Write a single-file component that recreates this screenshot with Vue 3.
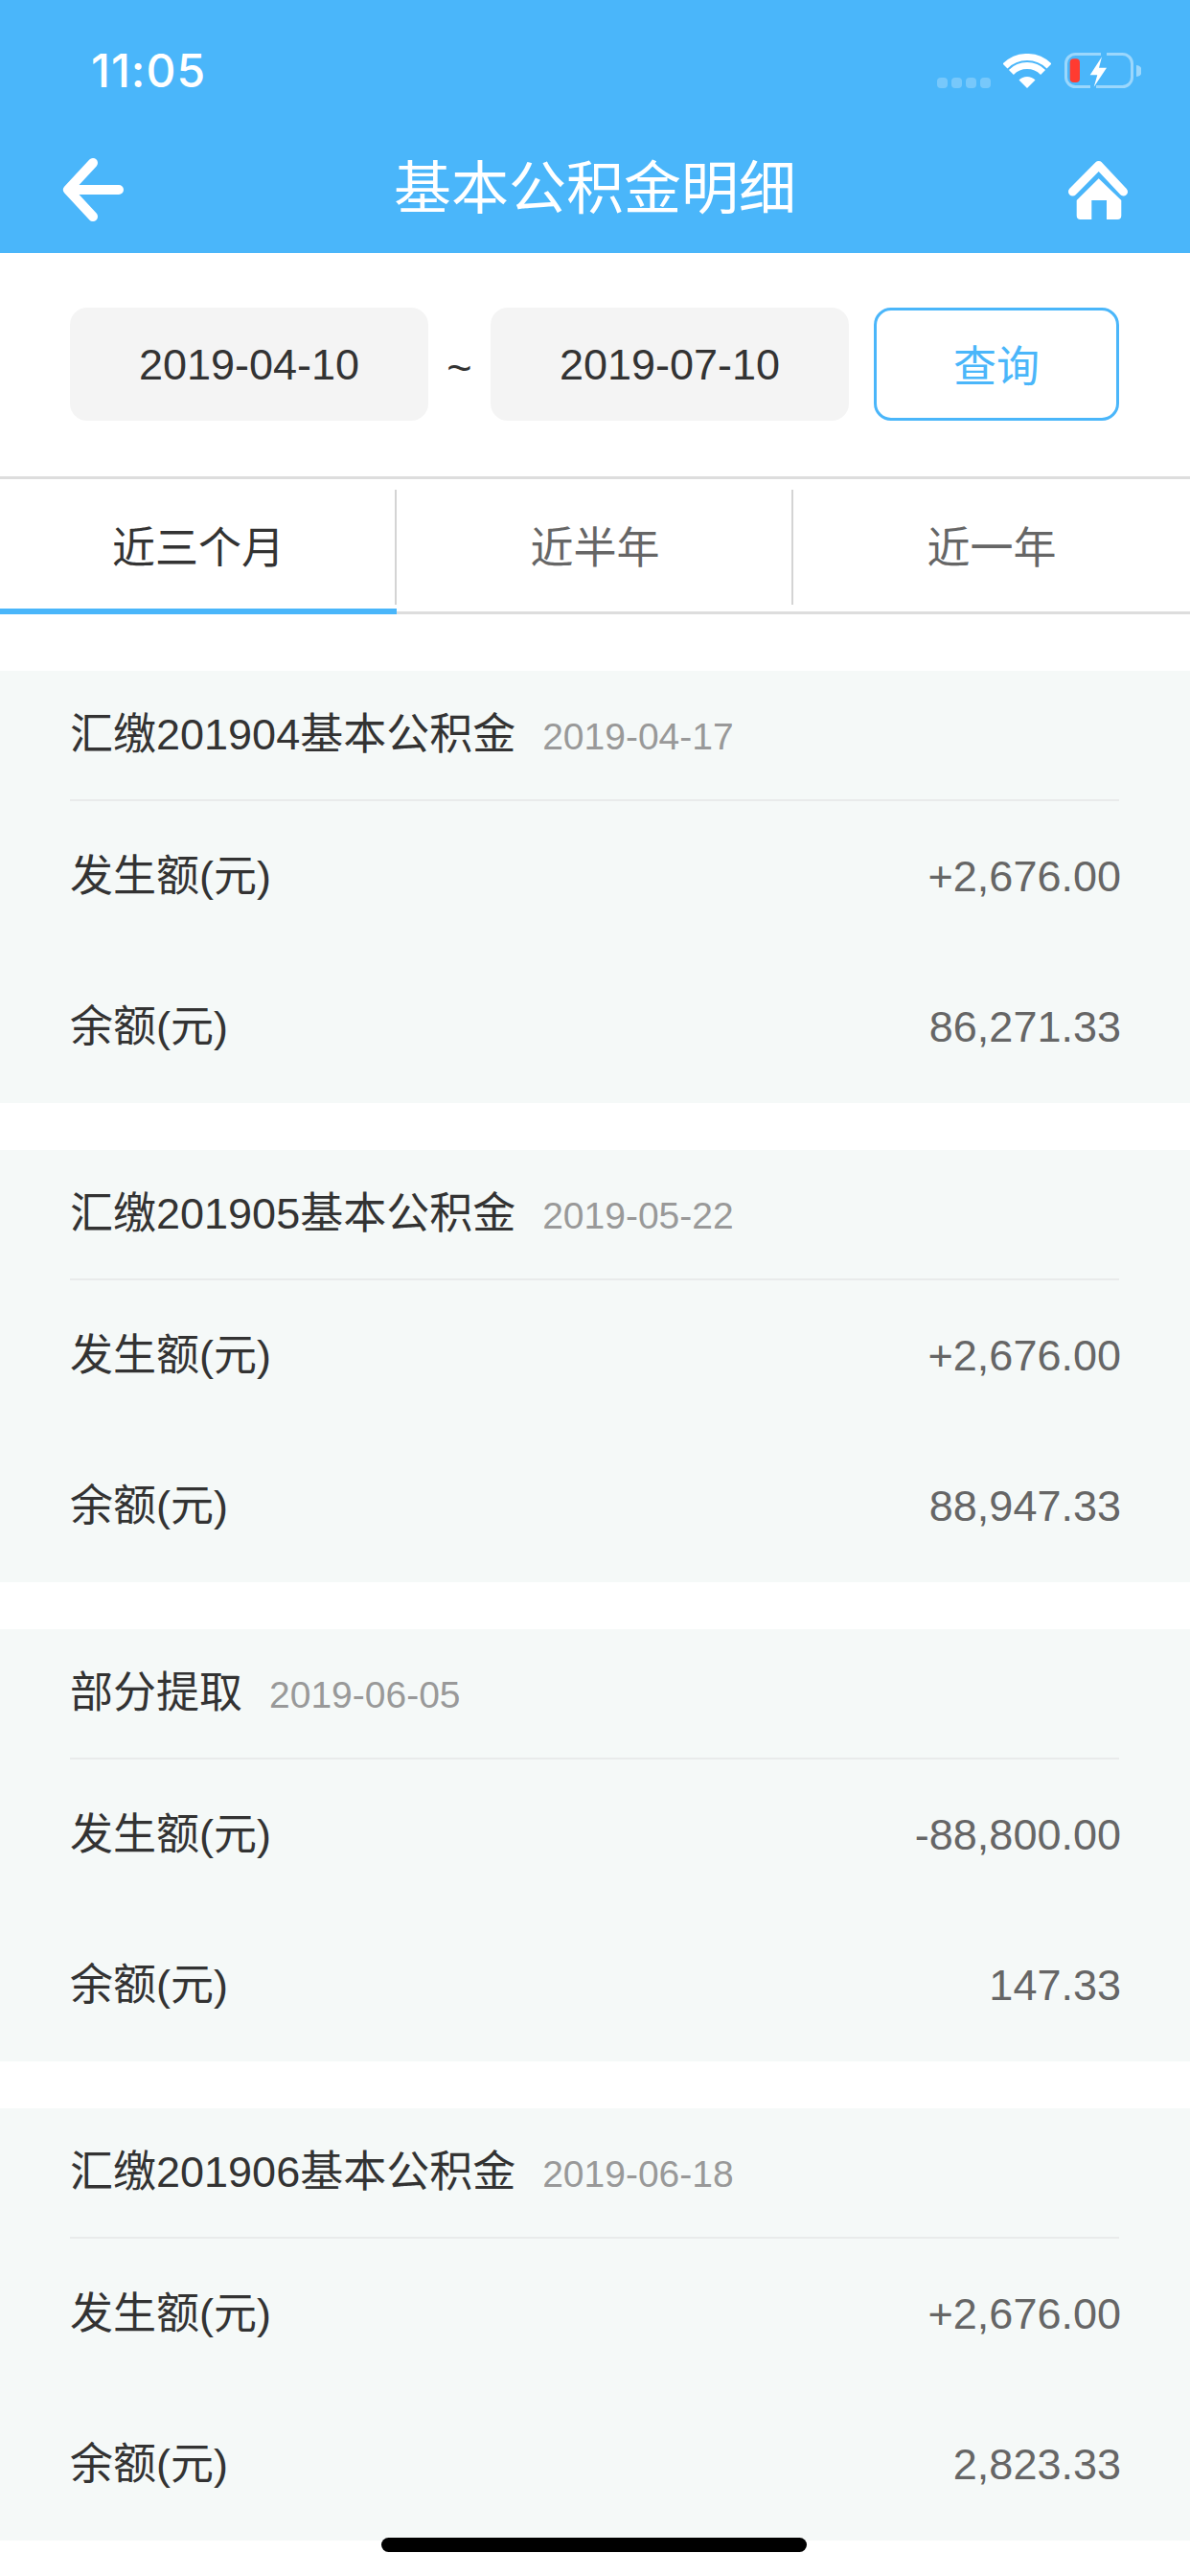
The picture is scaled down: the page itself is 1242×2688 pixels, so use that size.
<script setup>
const tabs = ['近三个月', '近半年', '近一年']
const records = [
  { title: '汇缴201904基本公积金', date: '2019-04-17', amount: '+2,676.00', balance: '86,271.33' },
  { title: '汇缴201905基本公积金', date: '2019-05-22', amount: '+2,676.00', balance: '88,947.33' },
  { title: '部分提取', date: '2019-06-05', amount: '-88,800.00', balance: '147.33' },
  { title: '汇缴201906基本公积金', date: '2019-06-18', amount: '+2,676.00', balance: '2,823.33' }
]
</script>

<template>
  <div class="page">
    <header class="header">
      <div class="status">
        <span class="time">11:05</span>
        <div class="status-icons">
          <div class="dots"><i></i><i></i><i></i><i></i></div>
          <svg class="wifi" width="50" height="36" viewBox="0 0 50 36" fill="none">
            <path d="M2 13 A32.5 32.5 0 0 1 48 13" stroke="#fff" stroke-width="7" />
            <path d="M8.4 19.4 A23.5 23.5 0 0 1 41.6 19.4" stroke="#fff" stroke-width="7" />
            <path d="M25 36 L16.5 27.5 A12 12 0 0 1 33.5 27.5 Z" fill="#fff" />
          </svg>
          <svg class="battery" width="80" height="38" viewBox="0 0 80 38" fill="none">
            <path d="M38 1.5 H11.5 A10 10 0 0 0 1.5 11.5 V25.5 A10 10 0 0 0 11.5 35.5 H27" stroke="#fff" stroke-opacity=".45" stroke-width="3" />
            <path d="M33 35.5 H60.5 A10 10 0 0 0 70.5 25.5 V11.5 A10 10 0 0 0 60.5 1.5 H44" stroke="#fff" stroke-opacity=".45" stroke-width="3" />
            <path d="M75 13 A6 6 0 0 1 75 25 Z" fill="#fff" fill-opacity=".45" />
            <rect x="5.7" y="6.3" width="10.3" height="24.7" rx="4" fill="#ff3b30" />
            <path d="M39 4.3 L26.7 23.3 H34.3 L30.7 35.7 L44 15.7 H36 Z" fill="#fff" />
          </svg>
        </div>
      </div>
      <nav class="nav">
        <div class="slot">
          <svg width="66" height="66" viewBox="0 0 66 66" fill="none">
            <path d="M32 5 L6 33 L32 61 M6 33 H59" stroke="#fff" stroke-width="10" stroke-linecap="round" stroke-linejoin="round" />
          </svg>
        </div>
        <h1 class="title">基本公积金明细</h1>
        <div class="slot slot-end">
          <svg width="62" height="61" viewBox="0 0 62 61">
            <path d="M4.5 32 L31.7 4.5 L57.5 32" fill="none" stroke="#fff" stroke-width="9" stroke-linecap="round" stroke-linejoin="round" />
            <path d="M31.7 18.3 L55.3 41 V57 a4 4 0 0 1 -4 4 H40 V41 H24.3 V61 H12.7 a4 4 0 0 1 -4 -4 V41 Z" fill="#fff" />
          </svg>
        </div>
      </nav>
    </header>

    <section class="query">
      <div class="date-box">2019-04-10</div>
      <div class="tilde">~</div>
      <div class="date-box">2019-07-10</div>
      <button class="search">查询</button>
    </section>

    <div class="tabs">
      <div v-for="(tab, i) in tabs" :key="tab" class="tab" :class="{ active: i === 0 }">{{ tab }}</div>
    </div>

    <main class="list">
      <article v-for="r in records" :key="r.date" class="card">
        <div class="card-head">
          <span class="card-title">{{ r.title }}</span>
          <span class="card-date">{{ r.date }}</span>
        </div>
        <div class="row"><span>发生额(元)</span><span class="value">{{ r.amount }}</span></div>
        <div class="row"><span>余额(元)</span><span class="value">{{ r.balance }}</span></div>
      </article>
    </main>

    <div class="home-bar"></div>
  </div>
</template>

<style>
html, body { margin: 0; padding: 0; background: #fff; }
</style>

<style scoped>
.page {
  position: relative;
  width: 1242px;
  height: 2688px;
  overflow: hidden;
  background: #fff;
  color: #333;
  font-family: "Liberation Sans", "Noto Sans CJK SC", sans-serif;
  font-size: 45px;
  line-height: 60px;
}
.header { height: 264px; background: #4ab6fa; color: #fff; }
.status {
  height: 132px;
  box-sizing: border-box;
  padding: 55px 51px 0 95px;
  display: flex;
  justify-content: space-between;
  align-items: flex-start;
}
.time { font-family: Inter, sans-serif; font-weight: 500; font-size: 48px; line-height: 38px; letter-spacing: 1px; }
.status-icons { display: flex; align-items: flex-end; height: 38px; }
.dots { display: flex; gap: 4px; margin: 0 13px 1px 0; }
.dots i { width: 11px; height: 11px; border-radius: 4px; background: rgba(255, 255, 255, .25); }
.wifi { display: block; margin: 0 14px 1px 0; }
.battery { display: block; }
.nav { height: 132px; padding: 0 65px; display: flex; align-items: center; }
.slot { width: 70px; display: flex; }
.slot-end { justify-content: flex-end; }
.slot svg { display: block; }
.title { flex: 1; margin: 0; text-align: center; font-size: 60px; font-weight: 400; line-height: 80px; }

.query { display: flex; align-items: flex-start; padding: 57px 74px 58px 73px; }
.date-box {
  width: 374px;
  height: 118px;
  box-sizing: border-box;
  padding-top: 2px;
  border-radius: 18px;
  background: #f4f4f4;
  display: flex;
  align-items: center;
  justify-content: center;
}
.tilde { width: 65px; height: 118px; line-height: 126px; text-align: center; }
.search {
  width: 256px;
  height: 118px;
  margin-left: 26px;
  padding: 7px 0 0;
  border: 3px solid #4ab6fa;
  border-radius: 18px;
  background: #fff;
  color: #4ab6fa;
  font: inherit;
}

.tabs {
  height: 144px;
  box-sizing: border-box;
  border-top: 3px solid #ddd;
  border-bottom: 3px solid #ddd;
  display: grid;
  grid-template-columns: repeat(3, 1fr);
}
.tab { position: relative; padding-top: 7px; display: flex; align-items: center; justify-content: center; color: #666; }
.tab.active { color: #333; }
.tab:not(:last-child)::after {
  content: "";
  position: absolute;
  top: 11px;
  right: 0;
  width: 2px;
  height: 120px;
  background: #d4d4d4;
}
.tab.active::before {
  content: "";
  position: absolute;
  left: 0;
  right: 0;
  bottom: -3px;
  height: 6px;
  background: #4ab6fa;
}

.list { display: flex; flex-direction: column; gap: 49px; padding-top: 59px; }
.card { height: 451px; padding: 0 74px 0 73px; background: #f5f9f8; }
.card-head {
  height: 136px;
  box-sizing: border-box;
  padding-top: 37px;
  border-bottom: 2px solid #e9ebeb;
  display: flex;
  align-items: baseline;
  gap: 28px;
}
.card-date { color: #999; font-size: 39px; }
.row { height: 157px; margin-right: -2px; display: flex; align-items: center; justify-content: space-between; }
.value { color: #666; }
.home-bar {
  position: absolute;
  left: 398px;
  top: 2648px;
  width: 444px;
  height: 15px;
  border-radius: 8px;
  background: #000;
}
</style>
